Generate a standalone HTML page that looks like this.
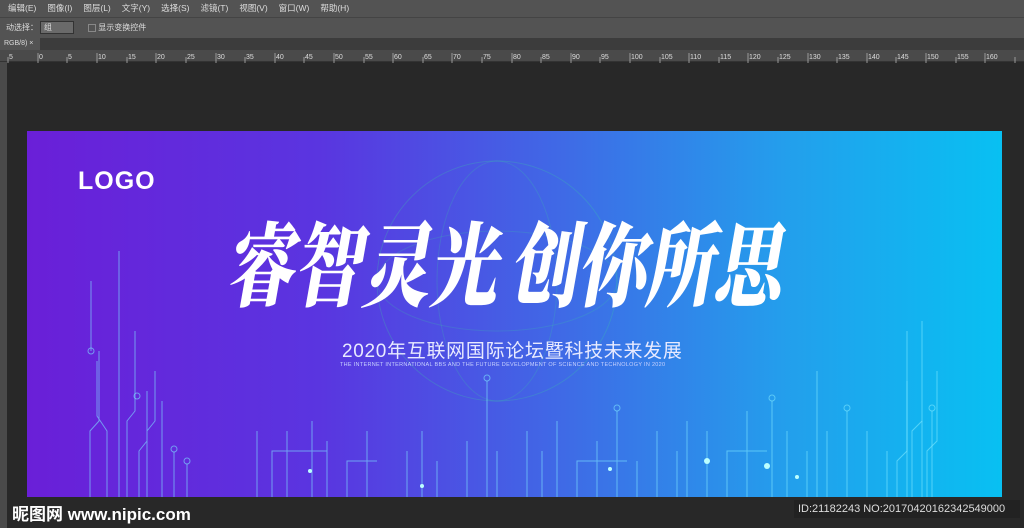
<!DOCTYPE html>
<html><head><meta charset="utf-8"><style>
*{margin:0;padding:0;box-sizing:border-box}
body{width:1024px;height:528px;overflow:hidden;background:#282828;font-family:"Liberation Sans","Noto Sans CJK SC",sans-serif;position:relative}
.menu{position:absolute;left:0;top:0;width:1024px;height:17px;background:#535353;color:#ddd;font-size:8.5px;line-height:17px;padding-left:8px}
.menu span{margin-right:11px}
.tool{position:absolute;left:0;top:17px;width:1024px;height:21px;background:#535353;border-top:1px solid #444;color:#ddd;font-size:8px;line-height:20px}
.tabs{position:absolute;left:0;top:38px;width:1024px;height:12px;background:#3c3c3c}
.tab{position:absolute;left:0;top:0;width:40px;height:12px;background:#535353;color:#ddd;font-size:7px;line-height:12px;padding-left:4px}
.ruler{position:absolute;left:0;top:50px;width:1024px;height:12px;background:#4a4a4a;border-bottom:1px solid #333}
.canvas{position:absolute;left:27px;top:131px;width:975px;height:366px;background:linear-gradient(90deg,#6a1fd8 0%,#5a35e0 30%,#3f6ae6 55%,#239fec 78%,#08c0f2 100%);overflow:hidden}
.logo{position:absolute;left:51px;top:36px;color:#fff;font-weight:bold;font-size:25px;letter-spacing:1px}
.title{position:absolute;top:64px;color:#fff;font-family:"Noto Serif CJK SC",serif;font-weight:900;font-size:68px;letter-spacing:0px;transform:skewX(-10deg) scaleY(1.35);transform-origin:left top;white-space:nowrap}
.sub{position:absolute;left:315px;top:205px;color:#e8eaff;font-size:19px;letter-spacing:0.7px;white-space:nowrap}
.en{position:absolute;left:313px;top:231px;color:#c9d2ff;font-size:5.5px;letter-spacing:0.3px;white-space:nowrap}
.wm{position:absolute;left:12px;top:500px;color:#fff;font-weight:bold;font-size:17px}
.id{position:absolute;left:794px;top:500px;width:226px;height:18px;background:#222;color:#ddd;font-size:11px;line-height:18px;padding-left:4px}
</style></head><body>
<div class="menu"><span>编辑(E)</span><span>图像(I)</span><span>图层(L)</span><span>文字(Y)</span><span>选择(S)</span><span>滤镜(T)</span><span>视图(V)</span><span>窗口(W)</span><span>帮助(H)</span></div>
<div class="tool"><span style="margin-left:6px">动选择：</span><span style="display:inline-block;width:34px;height:13px;background:#6a6a6a;border:1px solid #333;margin-left:2px;vertical-align:middle;line-height:11px;padding-left:3px">组</span><span style="display:inline-block;width:8px;height:8px;border:1px solid #888;margin-left:14px;vertical-align:middle"></span> 显示变换控件</div>
<div class="tabs"><div class="tab">RGB/8) ×</div></div>
<div class="ruler"><svg width="1024" height="12"><g stroke="#999" stroke-width="1">
<path d="M8 6V12M38 2V12M67 6V12M97 2V12M127 6V12M156 2V12M186 6V12M216 2V12M245 6V12M275 2V12M304 6V12M334 2V12M364 6V12M393 2V12M423 6V12M452 2V12M482 6V12M512 2V12M541 6V12M571 2V12M600 6V12M630 2V12M660 6V12M689 2V12M719 6V12M748 2V12M778 6V12M808 2V12M837 6V12M867 2V12M896 6V12M926 2V12M956 6V12M985 2V12M1015 6V12"/></g>
<g fill="#ddd" font-size="7" font-family="Liberation Sans"><text x="9" y="8">5</text><text x="39" y="8">0</text><text x="68" y="8">5</text><text x="98" y="8">10</text><text x="128" y="8">15</text><text x="157" y="8">20</text><text x="187" y="8">25</text><text x="217" y="8">30</text><text x="246" y="8">35</text><text x="276" y="8">40</text><text x="305" y="8">45</text><text x="335" y="8">50</text><text x="365" y="8">55</text><text x="394" y="8">60</text><text x="424" y="8">65</text><text x="453" y="8">70</text><text x="483" y="8">75</text><text x="513" y="8">80</text><text x="542" y="8">85</text><text x="572" y="8">90</text><text x="601" y="8">95</text><text x="631" y="8">100</text><text x="661" y="8">105</text><text x="690" y="8">110</text><text x="720" y="8">115</text><text x="749" y="8">120</text><text x="779" y="8">125</text><text x="809" y="8">130</text><text x="838" y="8">135</text><text x="868" y="8">140</text><text x="897" y="8">145</text><text x="927" y="8">150</text><text x="957" y="8">155</text><text x="986" y="8">160</text></g></svg></div>
<div style="position:absolute;left:0;top:62px;width:7px;height:466px;background:#4a4a4a"></div>
<div class="canvas">
<svg width="975" height="366" style="position:absolute;left:0;top:0">
<circle cx="470" cy="150" r="120" fill="none" stroke="#3ad3a0" stroke-opacity=".25"/>
<ellipse cx="470" cy="150" rx="60" ry="120" fill="none" stroke="#3ad3a0" stroke-opacity=".2"/>
<ellipse cx="470" cy="150" rx="120" ry="50" fill="none" stroke="#3ad3a0" stroke-opacity=".2"/>
<g stroke="#7fe8ff" stroke-opacity=".6" fill="none" stroke-width="1">
<path d="M63 366V300L72 290V220M80 366V300L70 285V230M92 366V120M100 366V290L108 280V200M112 366V320L120 310V260M120 366V300L128 290V240M135 366V270M64 220V150"/>
<circle cx="64" cy="220" r="3"/><circle cx="110" cy="265" r="3"/><circle cx="147" cy="318" r="3"/><circle cx="160" cy="330" r="3"/>
<path d="M147 366V321M160 366V333M230 366V300M245 366V320H300M260 366V300M285 366V290M300 366V310M320 366V330H350M340 366V300M380 366V320M395 366V300M410 366V330M440 366V310M460 366V250M470 366V320M500 366V300M515 366V320M530 366V290M550 366V330H600M570 366V310M590 366V280M610 366V330M630 366V300M650 366V320M660 366V290M680 366V300M700 366V320H740M720 366V280M745 366V270M760 366V300M780 366V320M790 366V240M800 366V300M820 366V280M840 366V300M860 366V320M880 366V250M895 366V290M905 366V280"/>
<path d="M870 366V330L880 320V200M885 366V300L895 290V190M900 366V320L910 310V240"/>
<circle cx="460" cy="247" r="3"/><circle cx="590" cy="277" r="3"/><circle cx="745" cy="267" r="3"/><circle cx="820" cy="277" r="3"/><circle cx="905" cy="277" r="3"/>
</g>
<g fill="#bff"><circle cx="283" cy="340" r="2"/><circle cx="395" cy="355" r="2"/><circle cx="583" cy="338" r="2"/><circle cx="680" cy="330" r="3"/><circle cx="740" cy="335" r="3"/><circle cx="770" cy="346" r="2"/></g>
</svg>
<div class="logo">LOGO</div>
<div class="title" style="left:216px">睿智灵光</div>
<div class="title" style="left:500px">创你所思</div>
<div class="sub">2020年互联网国际论坛暨科技未来发展</div>
<div class="en">THE INTERNET INTERNATIONAL BBS AND THE FUTURE DEVELOPMENT OF SCIENCE AND TECHNOLOGY IN 2020</div>
</div>
<div class="wm">昵图网 www.nipic.com</div>
<div class="id">ID:21182243 NO:20170420162342549000</div>
</body></html>
